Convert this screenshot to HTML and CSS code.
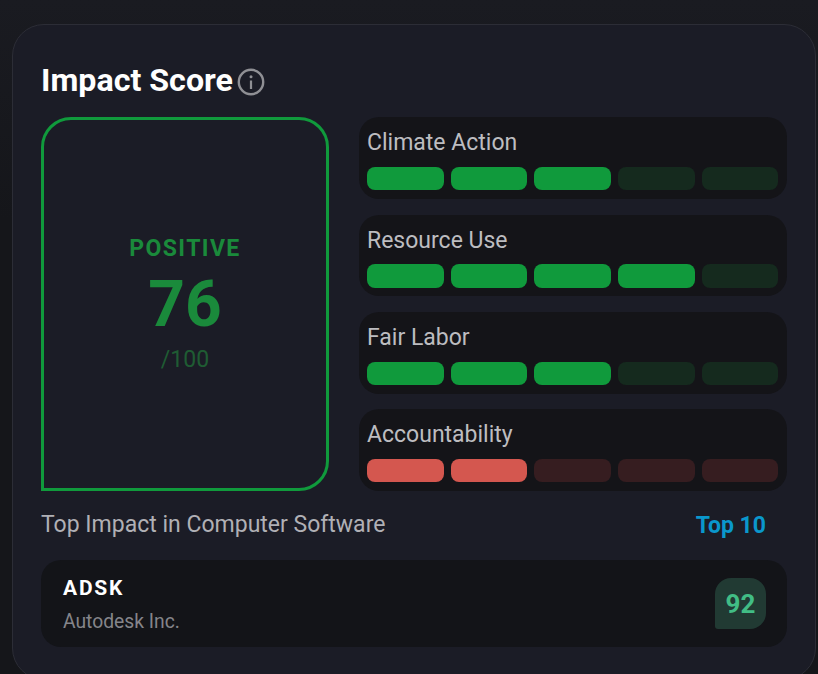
FILE: index.html
```html
<!DOCTYPE html>
<html lang="en">
<head>
  <meta charset="UTF-8" />
  <title>Impact Score</title>
  <link rel="stylesheet" href="styles.css">
</head>
<body>
  <div class="card">
    <div class="card-title">
      <h2>Impact Score</h2>
      <svg class="info-icon" width="28" height="28" viewBox="0 0 28 28" fill="none">
        <circle cx="14" cy="14" r="12.2" stroke="#8f8f94" stroke-width="2.4"/>
        <rect x="12.9" y="12.5" width="2.2" height="8.5" fill="#8f8f94"/>
        <circle cx="14" cy="8.8" r="1.5" fill="#8f8f94"/>
      </svg>
    </div>

    <div class="score-grid">
      <div class="score-box">
        <div class="score-label">POSITIVE</div>
        <div class="score-value">76</div>
        <div class="score-max">/100</div>
      </div>

      <div class="pillars">
        <div class="pillar">
          <div class="pillar-name">Climate Action</div>
          <div class="segments">
            <span class="seg good"></span><span class="seg good"></span><span class="seg good"></span><span class="seg good-off"></span><span class="seg good-off"></span>
          </div>
        </div>
        <div class="pillar">
          <div class="pillar-name">Resource Use</div>
          <div class="segments">
            <span class="seg good"></span><span class="seg good"></span><span class="seg good"></span><span class="seg good"></span><span class="seg good-off"></span>
          </div>
        </div>
        <div class="pillar">
          <div class="pillar-name">Fair Labor</div>
          <div class="segments">
            <span class="seg good"></span><span class="seg good"></span><span class="seg good"></span><span class="seg good-off"></span><span class="seg good-off"></span>
          </div>
        </div>
        <div class="pillar">
          <div class="pillar-name">Accountability</div>
          <div class="segments">
            <span class="seg bad"></span><span class="seg bad"></span><span class="seg bad-off"></span><span class="seg bad-off"></span><span class="seg bad-off"></span>
          </div>
        </div>
      </div>
    </div>

    <div class="top-row">
      <span class="top-label">Top Impact in Computer Software</span>
      <span class="top-link">Top 10</span>
    </div>

    <div class="company">
      <div class="company-info">
        <div class="ticker">ADSK</div>
        <div class="company-name">Autodesk Inc.</div>
      </div>
      <div class="badge">92</div>
    </div>
  </div>
</body>
</html>
```

FILE: styles.css
```css
body {
  margin: 0;
  height: 674px;
  overflow: hidden;
  box-sizing: border-box;
  padding: 24px 2px 0 12px;
  background: linear-gradient(#1a1b21 0, #15161a 220px);
  font-family: Roboto, "Liberation Sans", sans-serif;
}

.card {
  box-sizing: border-box;
  height: 656px;
  padding: 35.1px 28px 0 28px;
  background-color: #1b1c26;
  border: 1px solid #2c2d36;
  border-radius: 32px;
}

.card-title {
  display: flex;
  align-items: center;
  gap: 4px;
  height: 40px;
  margin-bottom: 17px;
}

.card-title h2 {
  margin: 0;
  color: #fff;
  font-size: 32.2px;
  font-weight: 700;
}

.info-icon {
  flex-shrink: 0;
  margin-top: 4px;
}

.score-grid {
  display: flex;
  gap: 30px;
}

.score-box {
  box-sizing: border-box;
  width: 288px;
  height: 374px;
  display: flex;
  flex-direction: column;
  align-items: center;
  justify-content: center;
  border: 3px solid #109a3c;
  border-radius: 30px 30px 30px 0;
}

.score-label {
  color: #1a8a3b;
  font-size: 23px;
  font-weight: 700;
  letter-spacing: 1.4px;
  margin-bottom: 3px;
}

.score-value {
  color: #1a8a3b;
  font-size: 64px;
  font-weight: 700;
  line-height: 80px;
  margin-bottom: 1px;
}

.score-max {
  color: #1f5c33;
  font-size: 23px;
}

.pillars {
  flex: 1;
  display: flex;
  flex-direction: column;
  justify-content: space-between;
}

.pillar {
  box-sizing: border-box;
  height: 81.75px;
  padding: 10px 8.65px 0 8px;
  background-color: #141418;
  border-radius: 20px;
}

.pillar-name {
  color: #bdbdc0;
  font-size: 23px;
  line-height: 30px;
  margin-bottom: 8.8px;
  padding-top: 1px;
}

.segments {
  display: flex;
  gap: 7px;
}

.seg {
  flex: 1;
  height: 23.25px;
  border-radius: 8px;
}

.good { background-color: #109a3c; }
.good-off { background-color: #152a1e; }
.bad { background-color: #d4574f; }
.bad-off { background-color: #361d20; }

.top-row {
  display: flex;
  justify-content: space-between;
  align-items: center;
  height: 30px;
  margin-top: 18.2px;
  padding-right: 21px;
}

.top-label {
  color: #b0b0b5;
  font-size: 23px;
}

.top-link {
  color: #0a97cc;
  font-size: 23px;
  font-weight: 700;
  padding-top: 2px;
}

.company {
  box-sizing: border-box;
  height: 87px;
  margin-top: 21px;
  padding: 0 21px 0 22px;
  display: flex;
  justify-content: space-between;
  align-items: center;
  background-color: #131418;
  border-radius: 20px;
}

.company-info {
  margin-top: 3px;
}

.ticker {
  color: #fff;
  font-size: 21px;
  font-weight: 700;
  letter-spacing: 1.8px;
  margin-top: -1px;
}

.company-name {
  margin-top: 10px;
  color: #85858a;
  font-size: 19.3px;
}

.badge {
  width: 51px;
  height: 51px;
  display: flex;
  align-items: center;
  justify-content: center;
  color: #41bd85;
  background-color: #213a33;
  font-size: 26px;
  font-weight: 700;
  border-radius: 16px 16px 16px 3px;
}
```
